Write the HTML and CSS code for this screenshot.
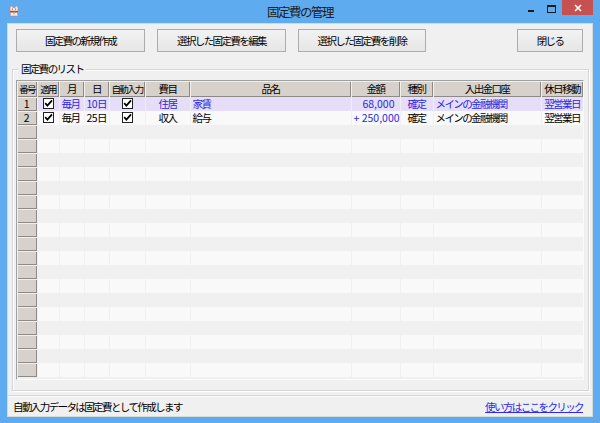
FILE: index.html
```html
<!DOCTYPE html>
<html lang="ja">
<head>
<meta charset="utf-8">
<title>固定費の管理</title>
<link rel="stylesheet" href="styles.css">
</head>
<body>
<div class="window">
  <div class="titlebar">
    <svg class="appicon" width="10" height="12" viewBox="0 0 10 12">
      <path d="M1 3 L2 0.5 L4 2.5 L6 2.5 L8 0.5 L9 3 L9 6 L1 6 Z" fill="#fbe9e0" stroke="#c9806a" stroke-width="0.6"/>
      <circle cx="3.5" cy="4" r="0.6" fill="#7a2a1a"/>
      <circle cx="6.5" cy="4" r="0.6" fill="#7a2a1a"/>
      <rect x="1" y="6" width="8" height="1.4" fill="#d83a2a"/>
      <path d="M1.5 7.4 L8.5 7.4 L9 11 L1 11 Z" fill="#f6eee6" stroke="#c9806a" stroke-width="0.6"/>
      <circle cx="5" cy="8.6" r="0.9" fill="#e8b030"/>
    </svg>
    <div class="title">固定費の管理</div>
    <div class="controls">
      <span class="ctl-min"></span>
      <span class="ctl-max"></span>
      <span class="ctl-close">
        <svg width="8" height="8" viewBox="0 0 8 8"><path d="M1 1 L7 7 M7 1 L1 7" stroke="#fff" stroke-width="1.6"/></svg>
      </span>
    </div>
  </div>
  <div class="client">
    <div class="toolbar">
      <button class="btn w129">固定費の新規作成</button>
      <button class="btn w129">選択した固定費を編集</button>
      <button class="btn w128">選択した固定費を削除</button>
      <span class="spacer"></span>
      <button class="btn w66">閉じる</button>
    </div>
    <div class="group">
      <div class="legend">固定費のリスト</div>
      <div class="grid">
        <table>
          <colgroup>
            <col class="c-no"><col class="c-use"><col class="c-mon"><col class="c-day"><col class="c-auto"><col class="c-cat"><col class="c-name"><col class="c-amt"><col class="c-kind"><col class="c-acct"><col class="c-hol">
          </colgroup>
          <thead>
            <tr>
              <th class="small">番号</th><th class="small">適用</th><th>月</th><th>日</th><th class="small">自動入力</th><th>費目</th><th>品名</th><th>金額</th><th>種別</th><th>入出金口座</th><th>休日移動</th>
            </tr>
          </thead>
          <tbody>
            <tr class="sel">
              <td class="rh">1</td><td class="ctr"><span class="chk"></span></td><td>毎月</td><td class="num">10日</td><td class="ctr"><span class="chk"></span></td><td class="ctr">住居</td><td>家賃</td><td class="amt">68,000</td><td class="ctr">確定</td><td>メインの金融機関</td><td class="ctr">翌営業日</td>
            </tr>
            <tr class="light">
              <td class="rh">2</td><td class="ctr"><span class="chk"></span></td><td>毎月</td><td class="num">25日</td><td class="ctr"><span class="chk"></span></td><td class="ctr">収入</td><td>給与</td><td class="amt blue">+ 250,000</td><td class="ctr">確定</td><td>メインの金融機関</td><td class="ctr">翌営業日</td>
            </tr>
            <tr class="dark"><td class="rh"></td><td></td><td></td><td></td><td></td><td></td><td></td><td></td><td></td><td></td><td></td></tr>
            <tr class="light"><td class="rh"></td><td></td><td></td><td></td><td></td><td></td><td></td><td></td><td></td><td></td><td></td></tr>
            <tr class="dark"><td class="rh"></td><td></td><td></td><td></td><td></td><td></td><td></td><td></td><td></td><td></td><td></td></tr>
            <tr class="light"><td class="rh"></td><td></td><td></td><td></td><td></td><td></td><td></td><td></td><td></td><td></td><td></td></tr>
            <tr class="dark"><td class="rh"></td><td></td><td></td><td></td><td></td><td></td><td></td><td></td><td></td><td></td><td></td></tr>
            <tr class="light"><td class="rh"></td><td></td><td></td><td></td><td></td><td></td><td></td><td></td><td></td><td></td><td></td></tr>
            <tr class="dark"><td class="rh"></td><td></td><td></td><td></td><td></td><td></td><td></td><td></td><td></td><td></td><td></td></tr>
            <tr class="light"><td class="rh"></td><td></td><td></td><td></td><td></td><td></td><td></td><td></td><td></td><td></td><td></td></tr>
            <tr class="dark"><td class="rh"></td><td></td><td></td><td></td><td></td><td></td><td></td><td></td><td></td><td></td><td></td></tr>
            <tr class="light"><td class="rh"></td><td></td><td></td><td></td><td></td><td></td><td></td><td></td><td></td><td></td><td></td></tr>
            <tr class="dark"><td class="rh"></td><td></td><td></td><td></td><td></td><td></td><td></td><td></td><td></td><td></td><td></td></tr>
            <tr class="light"><td class="rh"></td><td></td><td></td><td></td><td></td><td></td><td></td><td></td><td></td><td></td><td></td></tr>
            <tr class="dark"><td class="rh"></td><td></td><td></td><td></td><td></td><td></td><td></td><td></td><td></td><td></td><td></td></tr>
            <tr class="light"><td class="rh"></td><td></td><td></td><td></td><td></td><td></td><td></td><td></td><td></td><td></td><td></td></tr>
            <tr class="dark"><td class="rh"></td><td></td><td></td><td></td><td></td><td></td><td></td><td></td><td></td><td></td><td></td></tr>
            <tr class="light"><td class="rh"></td><td></td><td></td><td></td><td></td><td></td><td></td><td></td><td></td><td></td><td></td></tr>
            <tr class="dark"><td class="rh"></td><td></td><td></td><td></td><td></td><td></td><td></td><td></td><td></td><td></td><td></td></tr>
            <tr class="light"><td class="rh"></td><td></td><td></td><td></td><td></td><td></td><td></td><td></td><td></td><td></td><td></td></tr>
          </tbody>
        </table>
      </div>
    </div>
    <div class="statusbar">
      <span class="status-text">自動入力データは固定費として作成します</span>
      <a class="help" href="#">使い方はここをクリック</a>
    </div>
  </div>
</div>
</body>
</html>
```
FILE: styles.css
```css
* { box-sizing: border-box; }
html, body { margin: 0; padding: 0; }
body {
  width: 600px;
  height: 423px;
  overflow: hidden;
  background: #5fabef;
  font-family: "Noto Sans CJK JP", "Noto Sans", sans-serif;
  font-size: 10.5px;
  letter-spacing: -1.6px;
  color: #000;
}
.window {
  width: 600px;
  height: 423px;
  display: flex;
  flex-direction: column;
  background: #5fabef;
}
.titlebar {
  height: 23px;
  flex: none;
  position: relative;
}
.appicon { position: absolute; left: 9px; top: 5px; }
.title {
  text-align: center;
  font-size: 12.5px;
  letter-spacing: -1.5px;
  line-height: 23px;
  color: #1a1a1a;
}
.controls { position: absolute; right: 7px; top: 0; height: 15px; display: flex; }
.ctl-min { position: absolute; right: 59px; top: 10px; width: 6px; height: 2px; background: #1a1a1a; }
.ctl-max { position: absolute; right: 37px; top: 5px; width: 9px; height: 8px; border: 1px solid #1a1a1a; border-top-width: 2px; }
.ctl-close {
  position: absolute; right: 0; top: 0; width: 31px; height: 15px;
  background: #c75050; display: flex; align-items: center; justify-content: center;
}
.client {
  flex: 1;
  margin: 0 7px 7px 7px;
  background: #f0f0f0;
  border: 1px solid #d9d9d9;
  display: flex;
  flex-direction: column;
}
.toolbar {
  display: flex;
  gap: 12px;
  padding: 5px 9px 0 8px;
  height: 28px;
}
.spacer { flex: 1; }
.btn {
  height: 23px;
  font: inherit;
  letter-spacing: inherit;
  color: #000;
  background: linear-gradient(#f2f2f2, #e6e6e6);
  border: 1px solid #acacac;
  border-radius: 0;
  padding: 0;
}
.w129 { width: 129px; }
.w128 { width: 128px; }
.w66 { width: 66px; }
.group {
  margin: 17px 3px 0 4px;
  height: 322px;
  border: 1px solid #d5d5d5;
  box-shadow: inset 1px 1px 0 #fdfdfd, 1px 1px 0 #fdfdfd;
  position: relative;
  padding: 10px 4px 0 3px;
}
.legend {
  position: absolute;
  left: 5px;
  top: -8px;
  padding: 0 3px;
  background: #f0f0f0;
  line-height: 14px;
}
.grid {
  width: 568px;
  height: 300px;
  background: #f0f0f0;
  border: 1px solid #bdbdbd;
  border-top-color: #a0a0a0;
  border-left-color: #a0a0a0;
  border-right-color: #fafafa;
  border-bottom-color: #fafafa;
  overflow: hidden;
}
table {
  border-collapse: collapse;
  table-layout: fixed;
  width: 566px;
}
.c-no { width: 20px; }
.c-use { width: 22px; }
.c-mon { width: 25px; }
.c-day { width: 25px; }
.c-auto { width: 36px; }
.c-cat { width: 45px; }
.c-name { width: 161px; }
.c-amt { width: 49px; }
.c-kind { width: 33px; }
.c-acct { width: 108px; }
.c-hol { width: 42px; }
th {
  height: 16px;
  padding: 0;
  font-weight: normal;
  background: #d6d1ca;
  box-shadow: inset 1px 1px 0 #f2efe9, inset -1px -1px 0 #8d8a86;
  text-align: center;
  line-height: 16px;
  white-space: nowrap;
  overflow: hidden;
}
th.small { font-size: 9.5px; letter-spacing: -1.8px; }
td {
  height: 14px;
  padding: 0 2px;
  line-height: 14px;
  border-right: 1px solid #f0f0f0;
  white-space: nowrap;
  overflow: hidden;
}
tr.dark td { background: #f0f0f0; }
tr.light td { background: #f9f9f9; }
tr.sel td { background: #e6def9; color: #2828e0; }
td.rh {
  background: #d6d1ca !important;
  box-shadow: inset 1px 1px 0 #f2efe9, inset -1px -1px 0 #8d8a86;
  text-align: center;
  color: #000 !important;
  letter-spacing: 0;
  padding: 0;
}
.ctr { text-align: center; }
.num { letter-spacing: -0.6px; }
.amt { text-align: right; letter-spacing: 0; padding-right: 5px; }
.blue { color: #2828e0; }
.chk {
  display: inline-block;
  width: 11px;
  height: 11px;
  vertical-align: -1px;
  border: 1px solid #222;
  background: #fff url("data:image/svg+xml;utf8,<svg xmlns='http://www.w3.org/2000/svg' width='9' height='9' viewBox='0 0 9 9'><path d='M1.2 4.2 L3.4 6.6 L8 1.4' fill='none' stroke='%23000' stroke-width='1.8'/></svg>") center/9px 9px no-repeat;
}
td.ctr:has(.chk) { padding: 0; }
.statusbar {
  margin-top: 4px;
  height: 21px;
  border-top: 1px solid #d6d6d6;
  box-shadow: inset 0 1px 0 #fcfcfc;
  display: flex;
  align-items: center;
  justify-content: space-between;
  padding: 0 9px 0 5px;
}
.help { color: #2b2bf0; text-decoration: underline; }
```
